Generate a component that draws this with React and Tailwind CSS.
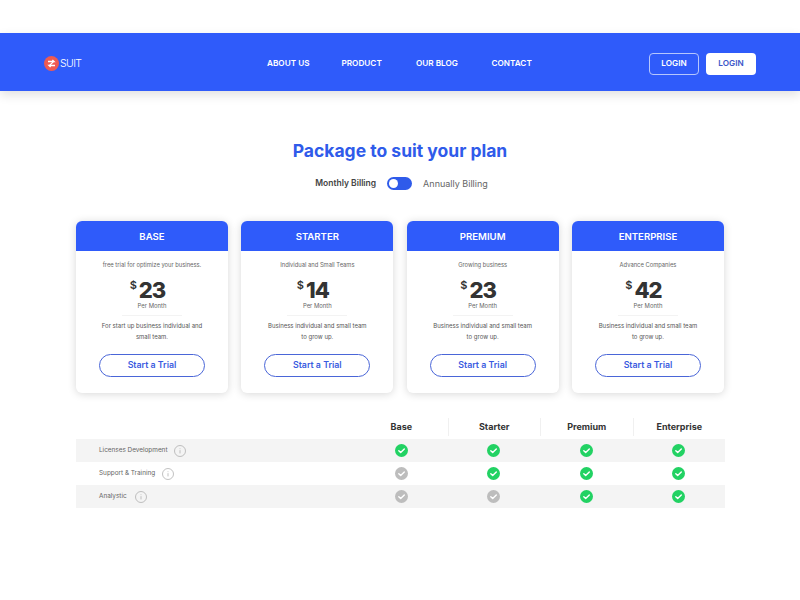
const plans = [
  { name: 'BASE', sub: 'free trial for optimize your business.', price: '23', desc: ['For start up business individual and', 'small team.'] },
  { name: 'STARTER', sub: 'Individual and Small Teams', price: '14', desc: ['Business individual and small team', 'to grow up.'] },
  { name: 'PREMIUM', sub: 'Growing business', price: '23', desc: ['Business individual and small team', 'to grow up.'] },
  { name: 'ENTERPRISE', sub: 'Advance Companies', price: '42', desc: ['Business individual and small team', 'to grow up.'] },
];

const rows = [
  { label: 'Licenses Development', gap: 'ml-[7px]', checks: [true, true, true, true], shaded: true },
  { label: 'Support & Training', gap: 'ml-[7px]', checks: [false, true, true, true], shaded: false },
  { label: 'Analystic', gap: 'ml-[8px]', checks: [false, false, true, true], shaded: true },
];

function Check({ on }) {
  return (
    <svg width="13" height="13" viewBox="0 0 13 13">
      <circle cx="6.5" cy="6.5" r="6.5" fill={on ? '#22d263' : '#bdbdbd'} />
      <path d="M3.8 6.7l1.9 1.9 3.6-3.6" fill="none" stroke="#fff" strokeWidth="1.4" strokeLinecap="round" strokeLinejoin="round" />
    </svg>
  );
}

function InfoIcon() {
  return (
    <svg width="12" height="12" viewBox="0 0 12 12" fill="none">
      <circle cx="6" cy="6" r="5.5" stroke="#a8a8a8" strokeWidth="0.7" />
      <path d="M6 5.2v3.2M6 3.4v.7" stroke="#a8a8a8" strokeWidth="0.7" />
    </svg>
  );
}

function Logo() {
  return (
    <svg width="15" height="15" viewBox="0 0 15 15">
      <circle cx="7.5" cy="7.5" r="7.5" fill="#ee5a52" />
      <path d="M4 5.5h6l-1.6-1.5M11 9.5H5l1.6 1.5" fill="none" stroke="#fff" strokeWidth="1.3" />
      <path d="M9.5 5.5L5.5 9.5" stroke="#fff" strokeWidth="1.1" />
    </svg>
  );
}

function PlanCard({ plan }) {
  return (
    <div className="w-[152px] h-[172px] bg-white rounded-[6px] overflow-hidden shadow-[0_1px_8px_rgba(0,0,0,0.16)] flex flex-col items-center">
      <div className="w-full h-[30px] pt-[3px] bg-[#2f5bfa] text-white text-[9.6px] font-semibold flex items-center justify-center">{plan.name}</div>
      <p className="mt-[10px] text-[5.8px] leading-[8px] text-[#666]">{plan.sub}</p>
      <div className="mt-[10px] mr-[9px] h-[23px] flex items-start text-[#333]">
        <span className="text-[11px] leading-[14px] font-semibold mr-[2px] -mt-[1px]">$</span>
        <span className="text-[22px] leading-[23px] font-extrabold tracking-[-1px]">{plan.price}</span>
      </div>
      <p className="text-[5.9px] leading-[8px] text-[#666]">Per Month</p>
      <div className="mt-[5px] w-[60px] h-px bg-[#f3f3f3]" />
      <div className="mt-[4px] text-[6px] leading-[11px] text-[#555] text-center">
        <p>{plan.desc[0]}</p>
        <p>{plan.desc[1]}</p>
      </div>
      <button className="mt-[12px] w-[106px] h-[23px] rounded-full border-[1.5px] border-[#4a66d8] text-[#3a5be0] text-[8.8px] font-semibold flex items-center justify-center">
        Start a Trial
      </button>
    </div>
  );
}

export default function App() {
  return (
    <div className="w-[800px] h-[600px] bg-white overflow-hidden pt-[33px] font-['Inter',sans-serif]">
      {/* Header */}
      <header className="h-[58px] pt-[3px] bg-[#2f5bfa] shadow-[0_4px_10px_rgba(0,0,0,0.12)] flex items-center px-[44px]">
        <div className="w-[223px] flex items-center gap-[1px]">
          <Logo />
          <span className="text-white text-[10.5px] font-light tracking-[-0.6px]">SUIT</span>
        </div>
        <nav className="flex items-center text-white text-[8.2px] font-semibold">
          <span className="w-[74.5px]">ABOUT US</span>
          <span className="w-[74.5px]">PRODUCT</span>
          <span className="w-[75.5px]">OUR BLOG</span>
          <span>CONTACT</span>
        </nav>
        <div className="ml-auto flex items-center gap-[7px] text-[8.2px] font-semibold">
          <button className="w-[50px] h-[22px] rounded-[4px] border border-[#b6c6fd] text-white">LOGIN</button>
          <button className="w-[50px] h-[22px] rounded-[4px] bg-white text-[#3a55c8]">LOGIN</button>
        </div>
      </header>

      {/* Title */}
      <h1 className="mt-[48px] text-center text-[#2f5bea] text-[17.5px] leading-[24px] font-bold">Package to suit your plan</h1>
      <div className="mt-[14px] pl-[3px] flex items-center justify-center text-[8.5px]">
        <span className="text-[#444] font-semibold">Monthly Billing</span>
        <div className="mx-[11px] w-[25px] h-[13px] rounded-full bg-[#2f5bea] p-[2px] flex items-center">
          <div className="w-[9px] h-[9px] rounded-full bg-white" />
        </div>
        <span className="text-[#666] text-[9px]">Annually Billing</span>
      </div>

      {/* Cards */}
      <div className="mt-[30px] mx-[76px] flex justify-between">
        {plans.map((p) => <PlanCard key={p.name} plan={p} />)}
      </div>

      {/* Compare table */}
      <div className="mt-[23px] ml-[76px] w-[649px]">
        <div className="h-[23px] flex items-center text-[9px] font-bold text-[#333]">
          <div className="w-[279px]" />
          {['Base', 'Starter', 'Premium', 'Enterprise'].map((h, i) => (
            <div key={h} className={`w-[92.5px] h-[18px] flex items-center justify-center ${i > 0 ? 'border-l border-[#f0f0f0]' : ''}`}>{h}</div>
          ))}
        </div>
        {rows.map((r) => (
          <div key={r.label} className={`h-[23px] pt-[1px] flex items-center ${r.shaded ? 'bg-[#f4f4f4]' : 'bg-white'}`}>
            <div className="w-[279px] pl-[23px] flex items-center text-[6.4px] text-[#666]">
              <span className="pt-[1px]">{r.label}</span>
              <span className={r.gap}><InfoIcon /></span>
            </div>
            {r.checks.map((c, i) => (
              <div key={i} className="w-[92.5px] flex justify-center"><Check on={c} /></div>
            ))}
          </div>
        ))}
      </div>
    </div>
  );
}
